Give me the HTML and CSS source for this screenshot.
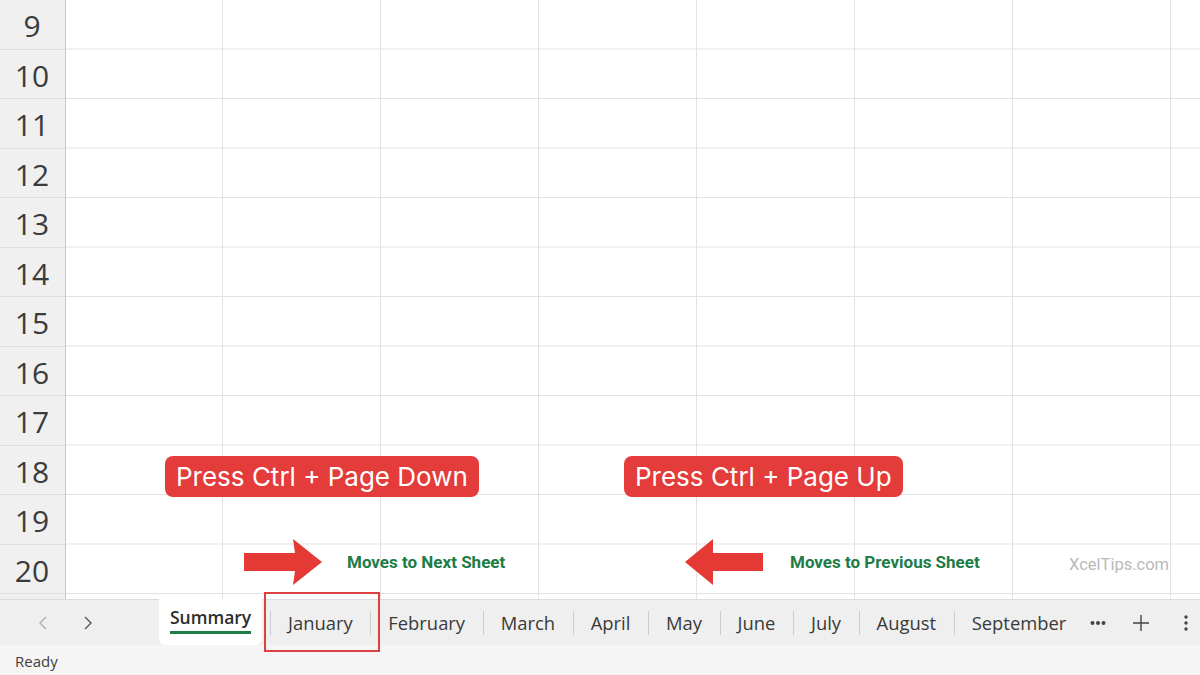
FILE: index.html
```html
<!DOCTYPE html>
<html>
<head>
<meta charset="utf-8">
<link rel="stylesheet" href="styles.css">
</head>
<body>
<div class="app">
  <div class="sheet">
    <div class="rowhead">
      <div class="rn">9</div><div class="rn">10</div><div class="rn">11</div><div class="rn">12</div>
      <div class="rn">13</div><div class="rn">14</div><div class="rn">15</div><div class="rn">16</div>
      <div class="rn">17</div><div class="rn">18</div><div class="rn">19</div><div class="rn">20</div>
    </div>
    <div class="grid"></div>

    <div class="callout callout-down">Press Ctrl + Page Down</div>
    <div class="callout callout-up">Press Ctrl + Page Up</div>

    <svg class="arrow arrow-right" width="80" height="48" viewBox="0 0 80 48">
      <polygon points="0,14 51,14 49,0 78,23 49,46 51,32 0,32" fill="#e53935"/>
    </svg>
    <div class="note note-next">Moves to Next Sheet</div>

    <svg class="arrow arrow-left" width="80" height="48" viewBox="0 0 80 48">
      <polygon points="78,14 28,14 28,0 0,23 28,46 28,32 78,32" fill="#e53935"/>
    </svg>
    <div class="note note-prev">Moves to Previous Sheet</div>

    <div class="brand">XcelTips.com</div>
  </div>

  <div class="tabbar">
    <div class="nav">
      <span class="navbtn">
        <svg width="12" height="16" viewBox="0 0 12 16"><path d="M9 2 L3 8 L9 14" fill="none" stroke="#b0b0b0" stroke-width="1.4"/></svg>
      </span>
      <span class="navbtn">
        <svg width="12" height="16" viewBox="0 0 12 16"><path d="M3 2 L9 8 L3 14" fill="none" stroke="#555" stroke-width="1.4"/></svg>
      </span>
    </div>
    <div class="tabs">
      <div class="tab active"><span class="label">Summary</span></div>
      <div class="tab first">January</div>
      <div class="tab">February</div>
      <div class="tab">March</div>
      <div class="tab">April</div>
      <div class="tab">May</div>
      <div class="tab">June</div>
      <div class="tab">July</div>
      <div class="tab">August</div>
      <div class="tab">September</div>
    </div>
    <div class="tools">
      <span class="tool more">
        <svg width="16" height="6" viewBox="0 0 16 6"><circle cx="2.5" cy="3" r="2" fill="#444"/><circle cx="8" cy="3" r="2" fill="#444"/><circle cx="13.5" cy="3" r="2" fill="#444"/></svg>
      </span>
      <span class="tool plus">
        <svg width="18" height="18" viewBox="0 0 18 18"><path d="M9 1 V17 M1 9 H17" stroke="#444" stroke-width="1.4"/></svg>
      </span>
      <span class="tool kebab">
        <svg width="4" height="18" viewBox="0 0 4 18"><circle cx="2" cy="3" r="1.7" fill="#444"/><circle cx="2" cy="9" r="1.7" fill="#444"/><circle cx="2" cy="15" r="1.7" fill="#444"/></svg>
      </span>
    </div>
    <div class="highlight"></div>
  </div>

  <div class="status">Ready</div>
</div>
</body>
</html>
```

FILE: styles.css
```css
html, body {
  margin: 0;
  padding: 0;
}
body {
  width: 1200px;
  height: 675px;
  overflow: hidden;
  background: #ffffff;
  font-family: "Open Sans", "Noto Sans", sans-serif;
}
.app {
  display: flex;
  flex-direction: column;
  width: 1200px;
  height: 675px;
}
.sheet {
  position: relative;
  display: flex;
  height: 600px;
  flex: none;
  border-bottom: 1px solid #dcdcdc;
  box-sizing: border-box;
}
.rowhead {
  width: 65px;
  flex: none;
  background: #f0f0f0;
  border-right: 1px solid #c6c6c6;
  display: flex;
  flex-direction: column;
}
.rn {
  height: 49.5px;
  box-sizing: border-box;
  border-bottom: 1px solid #dedede;
  display: flex;
  align-items: center;
  justify-content: center;
  padding-top: 4px;
  padding-right: 1px;
  font-family: "Open Sans", sans-serif;
  font-size: 30px;
  color: #3b3b3b;
  line-height: 1;
}
.grid {
  flex: 1;
  background-color: #ffffff;
  background-image:
    linear-gradient(to right, transparent 156.5px, #e2e2e2 156.5px, #e2e2e2 157.5px, transparent 157.5px),
    linear-gradient(to bottom, transparent 48.5px, #e2e2e2 48.5px);
  background-size: 158px 100%, 100% 49.5px;
}
.callout {
  position: absolute;
  top: 456px;
  height: 41px;
  box-sizing: border-box;
  background: #e43b3b;
  color: #ffffff;
  border-radius: 8px;
  font-family: "Inter", "Roboto", sans-serif;
  font-size: 26px;
  line-height: 41px;
  padding: 0 11px;
  white-space: nowrap;
}
.callout-down { left: 165px; width: 314px; }
.callout-up { left: 624px; width: 279px; }
.arrow {
  position: absolute;
  top: 539px;
}
.arrow-right { left: 244px; }
.arrow-left { left: 685px; }
.note {
  position: absolute;
  top: 552px;
  font-family: "Roboto", sans-serif;
  font-weight: 700;
  font-size: 17px;
  line-height: 20px;
  color: #1e7c47;
  white-space: nowrap;
}
.note-next { left: 347px; }
.note-prev { left: 790px; }
.brand {
  position: absolute;
  left: 1069px;
  top: 555px;
  font-family: "Roboto", sans-serif;
  font-size: 16.5px;
  line-height: 20px;
  color: #b9b9b9;
}
.tabbar {
  position: relative;
  height: 45px;
  flex: none;
  background: #efefef;
  display: flex;
  align-items: stretch;
}
.nav {
  width: 159px;
  flex: none;
  display: flex;
  align-items: center;
  padding-left: 37px;
  gap: 33px;
  box-sizing: border-box;
}
.navbtn {
  display: flex;
  align-items: center;
  width: 12px;
}
.tabs {
  display: flex;
  align-items: stretch;
}
.tab {
  position: relative;
  display: flex;
  align-items: center;
  padding: 0 17.8px 0 17.8px;
  font-family: "Open Sans", sans-serif;
  font-size: 18.4px;
  color: #3a3a3a;
  white-space: nowrap;
}
.tab + .tab::before {
  content: "";
  position: absolute;
  left: 0;
  top: 11px;
  height: 24px;
  width: 1px;
  background: #cdcdcd;
}
.tab.active {
  width: 103px;
  box-sizing: border-box;
  background: #ffffff;
  border-radius: 0 0 7px 7px;
  padding: 0 0 0 11px;
  margin-top: -1px;
  font-weight: 600;
  font-size: 17.5px;
  color: #2d2d2d;
  align-items: flex-start;
}
.tab.active .label {
  display: block;
  margin-top: 7px;
  padding-bottom: 3px;
  border-bottom: 3px solid #1e7c47;
  line-height: 22px;
}
.tab.first {
  margin-left: 8px;
  padding-left: 18px;
}
.tools {
  display: flex;
  align-items: center;
  margin-left: 6px;
}
.tool {
  display: flex;
  align-items: center;
  justify-content: center;
}
.more { width: 16px; }
.plus { margin-left: 26px; }
.kebab { margin-left: 34px; }
.highlight {
  position: absolute;
  z-index: 5;
  left: 264px;
  top: -8px;
  width: 116px;
  height: 60px;
  box-sizing: border-box;
  border: 2px solid #dd4040;
}
.status {
  flex: 1;
  background: #f5f5f5;
  font-family: "Open Sans", sans-serif;
  font-size: 15px;
  color: #404040;
  padding-left: 15px;
  display: flex;
  align-items: center;
  padding-top: 2px;
}
```
